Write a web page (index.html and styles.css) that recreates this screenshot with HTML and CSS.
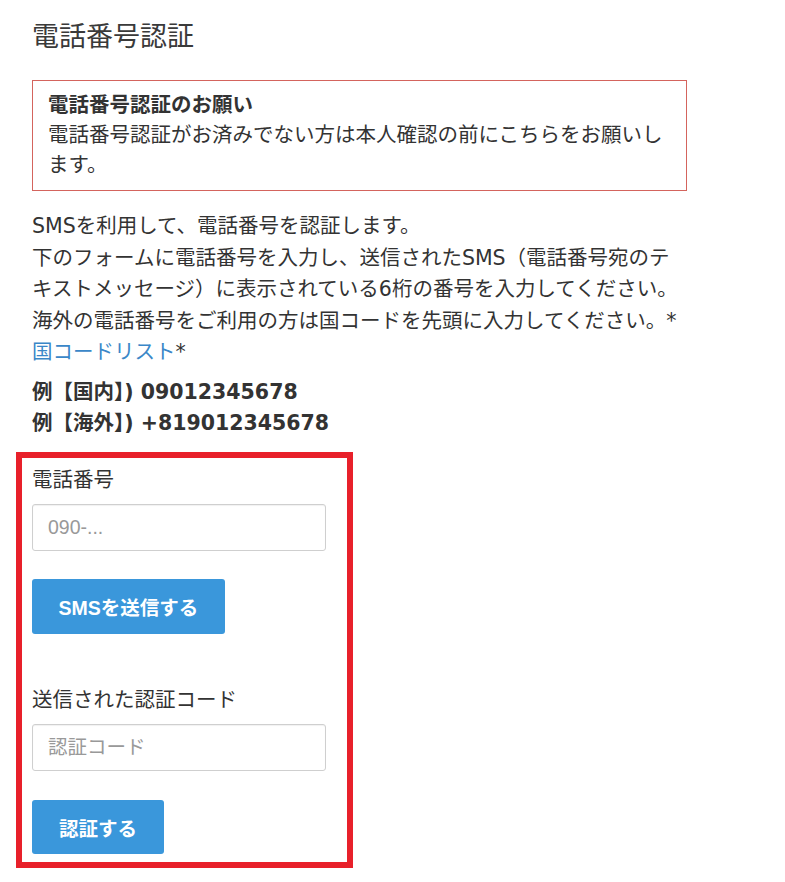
FILE: index.html
```html
<!DOCTYPE html>
<html lang="ja">
<head>
<meta charset="utf-8">
<title>電話番号認証</title>
<link rel="stylesheet" href="styles.css">
</head>
<body>
<main class="page">
  <h1 class="title">電話番号認証</h1>
  <div class="notice">
    <strong class="notice-head">電話番号認証のお願い</strong>
    <span class="notice-body">電話番号認証がお済みでない方は本人確認の前にこちらをお願いします。</span>
  </div>
  <p class="intro">SMSを利用して、電話番号を認証します。<br>下のフォームに電話番号を入力し、送信されたSMS（電話番号宛のテ<br>キストメッセージ）に表示されている6桁の番号を入力してください。<br>海外の電話番号をご利用の方は国コードを先頭に入力してください。*<br><a class="link" href="#">国コードリスト</a>*</p>
  <p class="examples">例【国内】) 09012345678<br>例【海外】) +819012345678</p>
  <form class="form-box">
    <label class="label" for="tel">電話番号</label>
    <input class="input" id="tel" type="text" placeholder="090-...">
    <button class="btn btn-send" type="button">SMSを送信する</button>
    <label class="label" for="code">送信された認証コード</label>
    <input class="input input-code" id="code" type="text" placeholder="認証コード">
    <button class="btn btn-verify" type="button">認証する</button>
  </form>
</main>
</body>
</html>
```

FILE: styles.css
```css
html, body {
  margin: 0;
  padding: 0;
  background: #fff;
}

body {
  color: #333;
  font-family: "DejaVu Sans", "Noto Sans CJK JP", sans-serif;
  font-size: 20.5px;
}

.page {
  padding: 0 32px;
  width: 655px;
}

.title {
  margin: 17px 0 27px;
  font-family: "Noto Sans CJK JP", sans-serif;
  font-size: 27px;
  line-height: 36px;
  font-weight: 400;
  color: #3a3a3a;
}

.notice {
  border: 1px solid #d4645d;
  padding: 7px 15px 12px;
  line-height: 30px;
  font-family: "Noto Sans CJK JP", sans-serif;
}

.notice-head {
  display: block;
  font-weight: 700;
}

.notice-body {
  display: block;
}

.intro {
  margin: 20px 0 0;
  line-height: 31.5px;
  white-space: nowrap;
}

.link {
  color: #3a87c8;
  text-decoration: none;
}

.examples {
  margin: 8px 0 0;
  line-height: 31px;
  font-weight: 700;
  white-space: nowrap;
}

.form-box {
  box-sizing: border-box;
  width: 337px;
  margin: 13.5px 0 0 -16px;
  border: 6px solid #e8202a;
  padding: 5px 10px 8px;
  display: flex;
  flex-direction: column;
  align-items: flex-start;
  font-family: "Liberation Sans", "Noto Sans CJK JP", sans-serif;
}

.label {
  font-family: "Noto Sans CJK JP", sans-serif;
  font-size: 20.5px;
  line-height: 30px;
  margin-bottom: 11px;
}

.input {
  box-sizing: border-box;
  width: 294px;
  height: 47px;
  margin: 0 0 28px;
  padding: 0 15px;
  border: 1px solid #cfcfcf;
  border-radius: 3px;
  box-shadow: inset 0 1px 1px rgba(0, 0, 0, 0.06);
  font-family: "Liberation Sans", "Noto Sans CJK JP", sans-serif;
  font-size: 19.5px;
  color: #333;
  background: #fff;
}

.input::placeholder {
  color: #999;
}

.input-code {
  margin-bottom: 29px;
}

.btn {
  box-sizing: border-box;
  border: none;
  border-radius: 3px;
  background: #3a97db;
  color: #fff;
  font-family: "Liberation Sans", "Noto Sans CJK JP", sans-serif;
  font-size: 19.5px;
  font-weight: 700;
  padding: 0;
  text-align: center;
  cursor: pointer;
}

.btn-send {
  width: 193px;
  height: 55px;
  margin-bottom: 49px;
}

.btn-verify {
  width: 132px;
  height: 54px;
}
```
